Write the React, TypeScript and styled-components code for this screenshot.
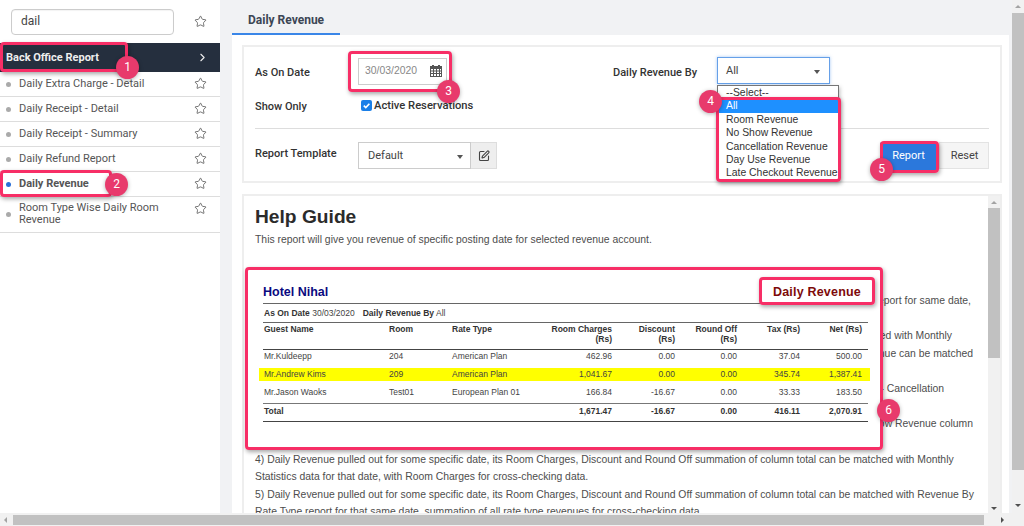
import React from 'react';
import styled, { createGlobalStyle } from 'styled-components';
import { Star, ChevronRight, SquarePen } from 'lucide-react';

const Global = createGlobalStyle`
  html, body { margin: 0; padding: 0; height: 526px; overflow: hidden; background: #fff; }
  #root { height: 526px; }
  * { box-sizing: border-box; }
`;

const Page = styled.div`
  position: relative; width: 1024px; height: 526px; overflow: hidden;
  display: flex; flex-direction: column;
  font-family: Roboto, "Liberation Sans", sans-serif; color: #444;
`;
const Top = styled.div`display: flex; flex: 1; min-height: 0;`;
const Sidebar = styled.aside`width: 220px; background: #fff; flex: none;`;
const SearchRow = styled.div`
  height: 43px; padding: 9px 13px 0 11px; display: flex; align-items: flex-start; justify-content: space-between; background: #fff;
`;
const SearchBox = styled.div`
  width: 163px; height: 26px; border: 1px solid #ccc; border-radius: 4px; padding-left: 9px;
  font-size: 12px; line-height: 23px; color: #444; box-shadow: inset 0 1px 1px rgba(0,0,0,.05);
`;
const StarWrap = styled.span`color: #555; display: flex; margin-top: ${p => p.$top ?? 7}px;`;
const GroupHead = styled.div`
  height: 29px; background: #252f3e; color: #eee; display: flex; align-items: center; justify-content: space-between;
  padding: 0 11px 0 6px; font-size: 11px; font-weight: 700;
`;
const NavItem = styled.div`
  min-height: 25px; border-bottom: 1px solid #ddd; display: flex; justify-content: space-between;
  padding: 0 13px 0 19px; font-size: 11px; line-height: 12px; color: #555; position: relative;
  font-weight: ${p => p.$active ? 700 : 400}; align-items: flex-start;
  & > span:first-child { padding-top: ${p => p.$tall ? 5 : 6}px; padding-bottom: ${p => p.$tall ? 6 : 0}px; max-width: 170px; }
  &::before { content: ""; position: absolute; left: 6px; top: ${p => p.$tall ? 15 : 10}px; width: 5px; height: 5px; border-radius: 50%;
    background: ${p => p.$active ? '#2a6fd6' : '#aaa'}; }
`;
const Main = styled.main`flex: 1; min-width: 0; background: #f1f2f4; display: flex; flex-direction: column; padding-left: 12px;`;
const TabBar = styled.div`height: 35px; display: flex; flex: none;`;
const Tab = styled.div`
  width: 108px; height: 35px; border-bottom: 2px solid #3a86e8; padding: 13px 0 0 16px;
  font-size: 12px; font-weight: 700; color: #3c4654;
`;
const Content = styled.div`flex: 1; min-height: 0; padding: 10px 7px 0 10px; margin-right: 3px; background: #fff; display: flex; flex-direction: column; gap: 11px;`;
const FormPanel = styled.section`
  height: 138px; background: #fff; border: 2px solid #eeeeee; padding: 0 11px 0 11px; flex: none; position: relative;
`;
const FormTop = styled.div`height: 82px; border-bottom: 1px solid #ddd; display: grid; grid-template-columns: 103px 255px 104px 1fr; grid-template-rows: 43px 36px;`;
const Label = styled.div`font-size: 11px; font-weight: 500; color: #333; padding-top: ${p => p.$pt ?? 19}px; white-space: nowrap; width: ${p => p.$w ? p.$w + 'px' : 'auto'};`;
const DateBox = styled.div`
  margin-top: 11px; width: 89px; height: 27px; border: 1px solid #ccc; padding: 6px 4px 0 6px; font-family: "Liberation Sans", sans-serif; font-size: 10.4px; color: #888;
  display: flex; justify-content: space-between; & svg { margin-top: -1px; color: #555; }
`;
const SelectBox = styled.div`
  margin-top: 10px; width: 113px; height: 27px; border: 1px solid #66a0e8; box-shadow: 0 0 3px rgba(80,150,240,.5); padding: 6px 9px 0 8px; font-size: 11px; color: #444;
  display: flex; justify-content: space-between;
`;
const Caret = styled.i`
  display: block; width: 0; height: 0; border-left: 3.5px solid transparent; border-right: 3.5px solid transparent; border-top: 4px solid #555; margin-top: 6px;
`;
const CheckRow = styled.div`display: flex; align-items: center; gap: 2px; font-size: 11.2px; font-weight: 500; color: #333; height: 14px; margin-top: 8px; padding-left: 3px;`;
const Box = styled.span`width: 11px; height: 11px; border-radius: 2px; background: #1a7fe8; display: flex; align-items: center; justify-content: center;`;
const FormBottom = styled.div`display: flex; padding-top: 13px; height: 50px;`;
const Template = styled.div`display: flex;`;
const TemplateSelect = styled.div`
  width: 113px; height: 27px; border: 1px solid #ccc; padding: 6px 7px 0 9px; font-size: 11px; color: #444; display: flex; justify-content: space-between;
`;
const EditBtn = styled.div`width: 26px; height: 27px; background: #eee; border: 1px solid #ddd; border-left: 0; display: flex; align-items: center; justify-content: center; color: #444;`;
const Buttons = styled.div`margin-left: auto; display: flex; height: 27px; gap: 3px;`;
const Primary = styled.div`width: 56px; height: 30px; background: #2b78dc; color: #fff; font-size: 11px; text-align: center; line-height: 27px; border-radius: 2px; padding-left: 1px;`;
const Ghost = styled.div`width: 50px; background: #f5f5f5; border: 1px solid #e3e3e3; color: #444; font-size: 11px; text-align: center; line-height: 25px; padding-left: 1px;`;
const HelpPanel = styled.section`
  flex: 1; min-height: 0; background: #fff; border: 2px solid #eeeeee; border-bottom: 0; display: flex; overflow: hidden;
`;
const HelpBody = styled.div`flex: 1; padding: 9px 0 0 11px; min-width: 0; overflow: hidden; font-family: "Liberation Sans", sans-serif;`;
const H1 = styled.h1`margin: 0 0 2px; font-size: 19.2px; line-height: 24px; font-weight: 700; color: #2b2b2b;`;
const Para = styled.div`font-size: 10.4px; line-height: 17.6px; color: #4d4d4d; white-space: nowrap; height: 17.6px; text-align: ${p => p.$pr != null ? 'right' : 'left'}; padding-right: ${p => p.$pr ?? 0}px;`;
const Gap = styled.div`height: ${p => p.$h}px;`;
const VBar = styled.div`
  width: ${p => p.$w}px; flex: none; background: ${p => p.$bg}; display: flex; flex-direction: column; align-items: center;
`;
const Thumb = styled.div`width: 100%; background: #c1c1c1; flex: none; height: ${p => p.$h}px; margin-top: ${p => p.$mt ?? 0}px;`;
const ArrowDown = styled.i`margin-top: auto; margin-bottom: ${p => p.$mb}px; width: 0; height: 0; border-left: 3px solid transparent; border-right: 3px solid transparent; border-top: 3px solid #505050; display: block;`;
const ArrowUp = styled.i`margin-top: 5px; width: 0; height: 0; border-left: 3px solid transparent; border-right: 3px solid transparent; border-bottom: 3px solid #a3a3a3; display: block;`;
const HBar = styled.div`height: 13px; flex: none; background: #f1f1f1; display: flex; align-items: center; padding-left: 4px;`;
const HThumb = styled.div`width: 971px; height: 10px; background: #c1c1c1; margin-left: 6px;`;
const ArrowLeft = styled.i`width: 0; height: 0; border-top: 3px solid transparent; border-bottom: 3px solid transparent; border-right: 3px solid #a3a3a3; display: block;`;
const ArrowRight = styled.i`margin-left: 17px; width: 0; height: 0; border-top: 3px solid transparent; border-bottom: 3px solid transparent; border-left: 3px solid #505050; display: block;`;

/* overlays */
const Ring = styled.div`
  position: absolute; border: 3px solid #f72e66; border-radius: 4px; box-shadow: 1px 2px 4px rgba(0,0,0,.35); pointer-events: none;
  left: ${p => p.$x}px; top: ${p => p.$y}px; width: ${p => p.$w}px; height: ${p => p.$h}px;
`;
const Badge = styled.div`
  position: absolute; width: 23px; height: 23px; border-radius: 50%; background: #e83a6c; color: #fff; font-size: 12px;
  text-align: center; line-height: 23px; box-shadow: 0 1px 4px rgba(0,0,0,.3);
  left: ${p => p.$x}px; top: ${p => p.$y}px;
`;
const Dropdown = styled.div`
  position: absolute; left: 717px; top: 85px; width: 122px; height: 95px; background: #fff; border: 1px solid #767676;
  font-family: "Liberation Sans", sans-serif; font-size: 10.4px; line-height: 13.3px; color: #333; box-shadow: 1px 2px 4px rgba(0,0,0,.25);
`;
const Opt = styled.div`padding-left: 8px; white-space: nowrap; height: 13.4px; background: ${p => p.$sel ? '#1e90ff' : 'transparent'}; color: ${p => p.$sel ? '#fff' : 'inherit'};`;
const ReportCard = styled.div`
  position: absolute; left: 246px; top: 268px; width: 637px; height: 181px; background: #fff; padding: 14px 0 0 17px;
  font-family: "Liberation Sans", sans-serif; font-size: 8.5px; color: #444;
`;
const ReportHead = styled.div`width: 605px; display: flex; justify-content: space-between; align-items: center; height: 22px; padding-bottom: 2px; border-bottom: 1px solid #666; padding-right: 7px;`;
const Hotel = styled.div`font-size: 12.5px; font-weight: 700; color: #0a0a80;`;
const ReportTitle = styled.div`font-size: 12.5px; font-weight: 700; color: #7d0a0a; letter-spacing: .2px;`;
const Meta = styled.div`width: 605px; height: 19px; line-height: 18px; padding-left: 1px; border-bottom: 1px solid #666; display: flex; gap: 8px; b { color: #333; }`;
const Cols = '125px 63px 75px 85px 63px 62px 63px 62px';
const RowGrid = styled.div`
  display: grid; grid-template-columns: ${Cols}; padding: 0 7px 0 1px; width: 605px;
  & > div:nth-child(n+4) { text-align: right; }
`;
const HeadRow = styled(RowGrid)`height: 27px; padding-top: 1px; font-weight: 700; color: #333; line-height: 10px; border-bottom: 1px solid #444;`;
const DataRow = styled(RowGrid)`
  height: ${p => p.$h}px; line-height: ${p => p.$lh}px;
  ${p => p.$hl ? 'background: #ffff00; margin-left: -4px; padding-left: 5px; padding-right: 8px; width: 611px;' : ''}
`;
const TotalRow = styled(RowGrid)`
  height: 19px; line-height: 15px; font-weight: 700; color: #333; border-top: 1px solid #777; border-bottom: 1px solid #444;
`;

const S = ({ top }: { top?: number }) => <StarWrap $top={top}><Star size={13} strokeWidth={1.5} /></StarWrap>;

const Calendar = () => (
  <svg width="12" height="13" viewBox="0 0 12 13">
    <path fill="#555" fillRule="evenodd" d="M0 2h2V1h2v1h4V1h2v1h2v11H0zM1 5v1.5h2V5zm3 0v1.5h2V5zm3 0v1.5h2V5zm3 0v1.5h1V5zM1 7.5V9h2V7.5zm3 0V9h2V7.5zm3 0V9h2V7.5zm3 0V9h1V7.5zM1 10v2h2v-2zm3 0v2h2v-2zm3 0v2h2v-2zm3 0v2h1v-2z" />
  </svg>
);

const items = ['Daily Extra Charge - Detail', 'Daily Receipt - Detail', 'Daily Receipt - Summary', 'Daily Refund Report'];
const rows = [
  ['Mr.Kuldeepp', '204', 'American Plan', '462.96', '0.00', '0.00', '37.04', '500.00'],
  ['Mr.Andrew Kims', '209', 'American Plan', '1,041.67', '0.00', '0.00', '345.74', '1,387.41'],
  ['Mr.Jason Waoks', 'Test01', 'European Plan 01', '166.84', '-16.67', '0.00', '33.33', '183.50'],
];
const rowSizes = [[18, 12], [13, 13], [22, 22]];

export default function App() {
  return (
    <Page>
      <Global />
      <Top>
        <Sidebar>
          <SearchRow><SearchBox>dail</SearchBox><S top={6} /></SearchRow>
          <GroupHead><span>Back Office Report</span><ChevronRight size={13} strokeWidth={2} /></GroupHead>
          {items.map(t => <NavItem key={t}><span>{t}</span><S top={5} /></NavItem>)}
          <NavItem $active><span>Daily Revenue</span><S top={5} /></NavItem>
          <NavItem $tall><span>Room Type Wise Daily Room Revenue</span><S top={5} /></NavItem>
        </Sidebar>
        <Main>
          <TabBar><Tab>Daily Revenue</Tab></TabBar>
          <Content>
            <FormPanel>
              <FormTop>
                <Label>As On Date</Label>
                <DateBox><span>30/03/2020</span><Calendar /></DateBox>
                <Label>Daily Revenue By</Label>
                <SelectBox><span>All</span><Caret /></SelectBox>
                <Label $pt={10}>Show Only</Label>
                <CheckRow><Box><svg width="9" height="9" viewBox="0 0 10 10"><path d="M2 5.2l2.2 2.2L8.2 3" fill="none" stroke="#fff" strokeWidth="1.8" /></svg></Box>Active Reservations</CheckRow>
              </FormTop>
              <FormBottom>
                <Label $pt={5} $w={103}>Report Template</Label>
                <Template>
                  <TemplateSelect><span>Default</span><Caret /></TemplateSelect>
                  <EditBtn><SquarePen size={12} strokeWidth={2.2} /></EditBtn>
                </Template>
                <Buttons><Primary>Report</Primary><Ghost>Reset</Ghost></Buttons>
              </FormBottom>
            </FormPanel>
            <HelpPanel>
              <HelpBody>
                <H1>Help Guide</H1>
                <Para>This report will give you revenue of specific posting date for selected revenue account.</Para>
                <Gap $h={43.6} />
                <Para $pr={17}>1) Daily Revenue pulled out for some specific date can be matched with Daily Revenue report for same date,</Para>
                <Gap $h={17.6} />
                <Para $pr={36}>2) Daily Revenue Room Charges summation of column total can be matched with Monthly</Para>
                <Para $pr={15}>Statistics data, and Daily Revenue column total of Room Revenue can be matched</Para>
                <Gap $h={17.6} />
                <Para $pr={44}>3) Daily Revenue pulled out with Revenue By option as - Cancellation</Para>
                <Gap $h={17.6} />
                <Para $pr={15}>Revenue can be matched with report for that date, its No Show Revenue column</Para>
                <Gap $h={17.6} />
                <Para>4) Daily Revenue pulled out for some specific date, its Room Charges, Discount and Round Off summation of column total can be matched with Monthly</Para>
                <Para>Statistics data for that date, with Room Charges for cross-checking data.</Para>
                <Para>5) Daily Revenue pulled out for some specific date, its Room Charges, Discount and Round Off summation of column total can be matched with Revenue By</Para>
                <Para>Rate Type report for that same date, summation of all rate type revenues for cross-checking data.</Para>
              </HelpBody>
              <VBar $w={12} $bg="#f1f1f1">
                <ArrowUp />
                <Thumb $h={150} $mt={4} />
                <ArrowDown $mb={3} />
              </VBar>
            </HelpPanel>
          </Content>
        </Main>
        <VBar $w={12} $bg="#f1f1f1">
          <ArrowUp />
          <Thumb $h={457} $mt={5} />
          <ArrowDown $mb={6} />
        </VBar>
      </Top>
      <HBar><ArrowLeft /><HThumb /><ArrowRight /></HBar>

      <ReportCard>
        <ReportHead><Hotel>Hotel Nihal</Hotel><ReportTitle>Daily Revenue</ReportTitle></ReportHead>
        <Meta><span><b>As On Date</b> 30/03/2020</span><span><b>Daily Revenue By</b> All</span></Meta>
        <HeadRow>
          <div>Guest Name</div><div>Room</div><div>Rate Type</div><div>Room Charges<br />(Rs)</div><div>Discount<br />(Rs)</div><div>Round Off<br />(Rs)</div><div>Tax (Rs)</div><div>Net (Rs)</div>
        </HeadRow>
        {rows.map((r, i) => <DataRow key={i} $hl={i === 1} $h={rowSizes[i][0]} $lh={rowSizes[i][1]}>{r.map((c, j) => <div key={j}>{c}</div>)}</DataRow>)}
        <TotalRow>
          <div>Total</div><div /><div /><div>1,671.47</div><div>-16.67</div><div>0.00</div><div>416.11</div><div>2,070.91</div>
        </TotalRow>
      </ReportCard>

      <Dropdown>
        <Opt>--Select--</Opt><Opt $sel>All</Opt><Opt>Room Revenue</Opt><Opt>No Show Revenue</Opt><Opt>Cancellation Revenue</Opt><Opt>Day Use Revenue</Opt><Opt>Late Checkout Revenue</Opt>
      </Dropdown>

      <Ring $x={0} $y={42} $w={128} $h={30} />
      <Ring $x={0} $y={170} $w={112} $h={27} />
      <Ring $x={348} $y={51} $w={104} $h={41} />
      <Ring $x={716} $y={97} $w={125} $h={85} />
      <Ring $x={880} $y={141} $w={59} $h={32} />
      <Ring $x={245} $y={267} $w={638} $h={183} />
      <Ring $x={759} $y={277} $w={116} $h={28} />
      <Badge $x={116} $y={56}>1</Badge>
      <Badge $x={105} $y={173}>2</Badge>
      <Badge $x={437} $y={80}>3</Badge>
      <Badge $x={699} $y={90}>4</Badge>
      <Badge $x={870} $y={158}>5</Badge>
      <Badge $x={877} $y={399}>6</Badge>
    </Page>
  );
}
